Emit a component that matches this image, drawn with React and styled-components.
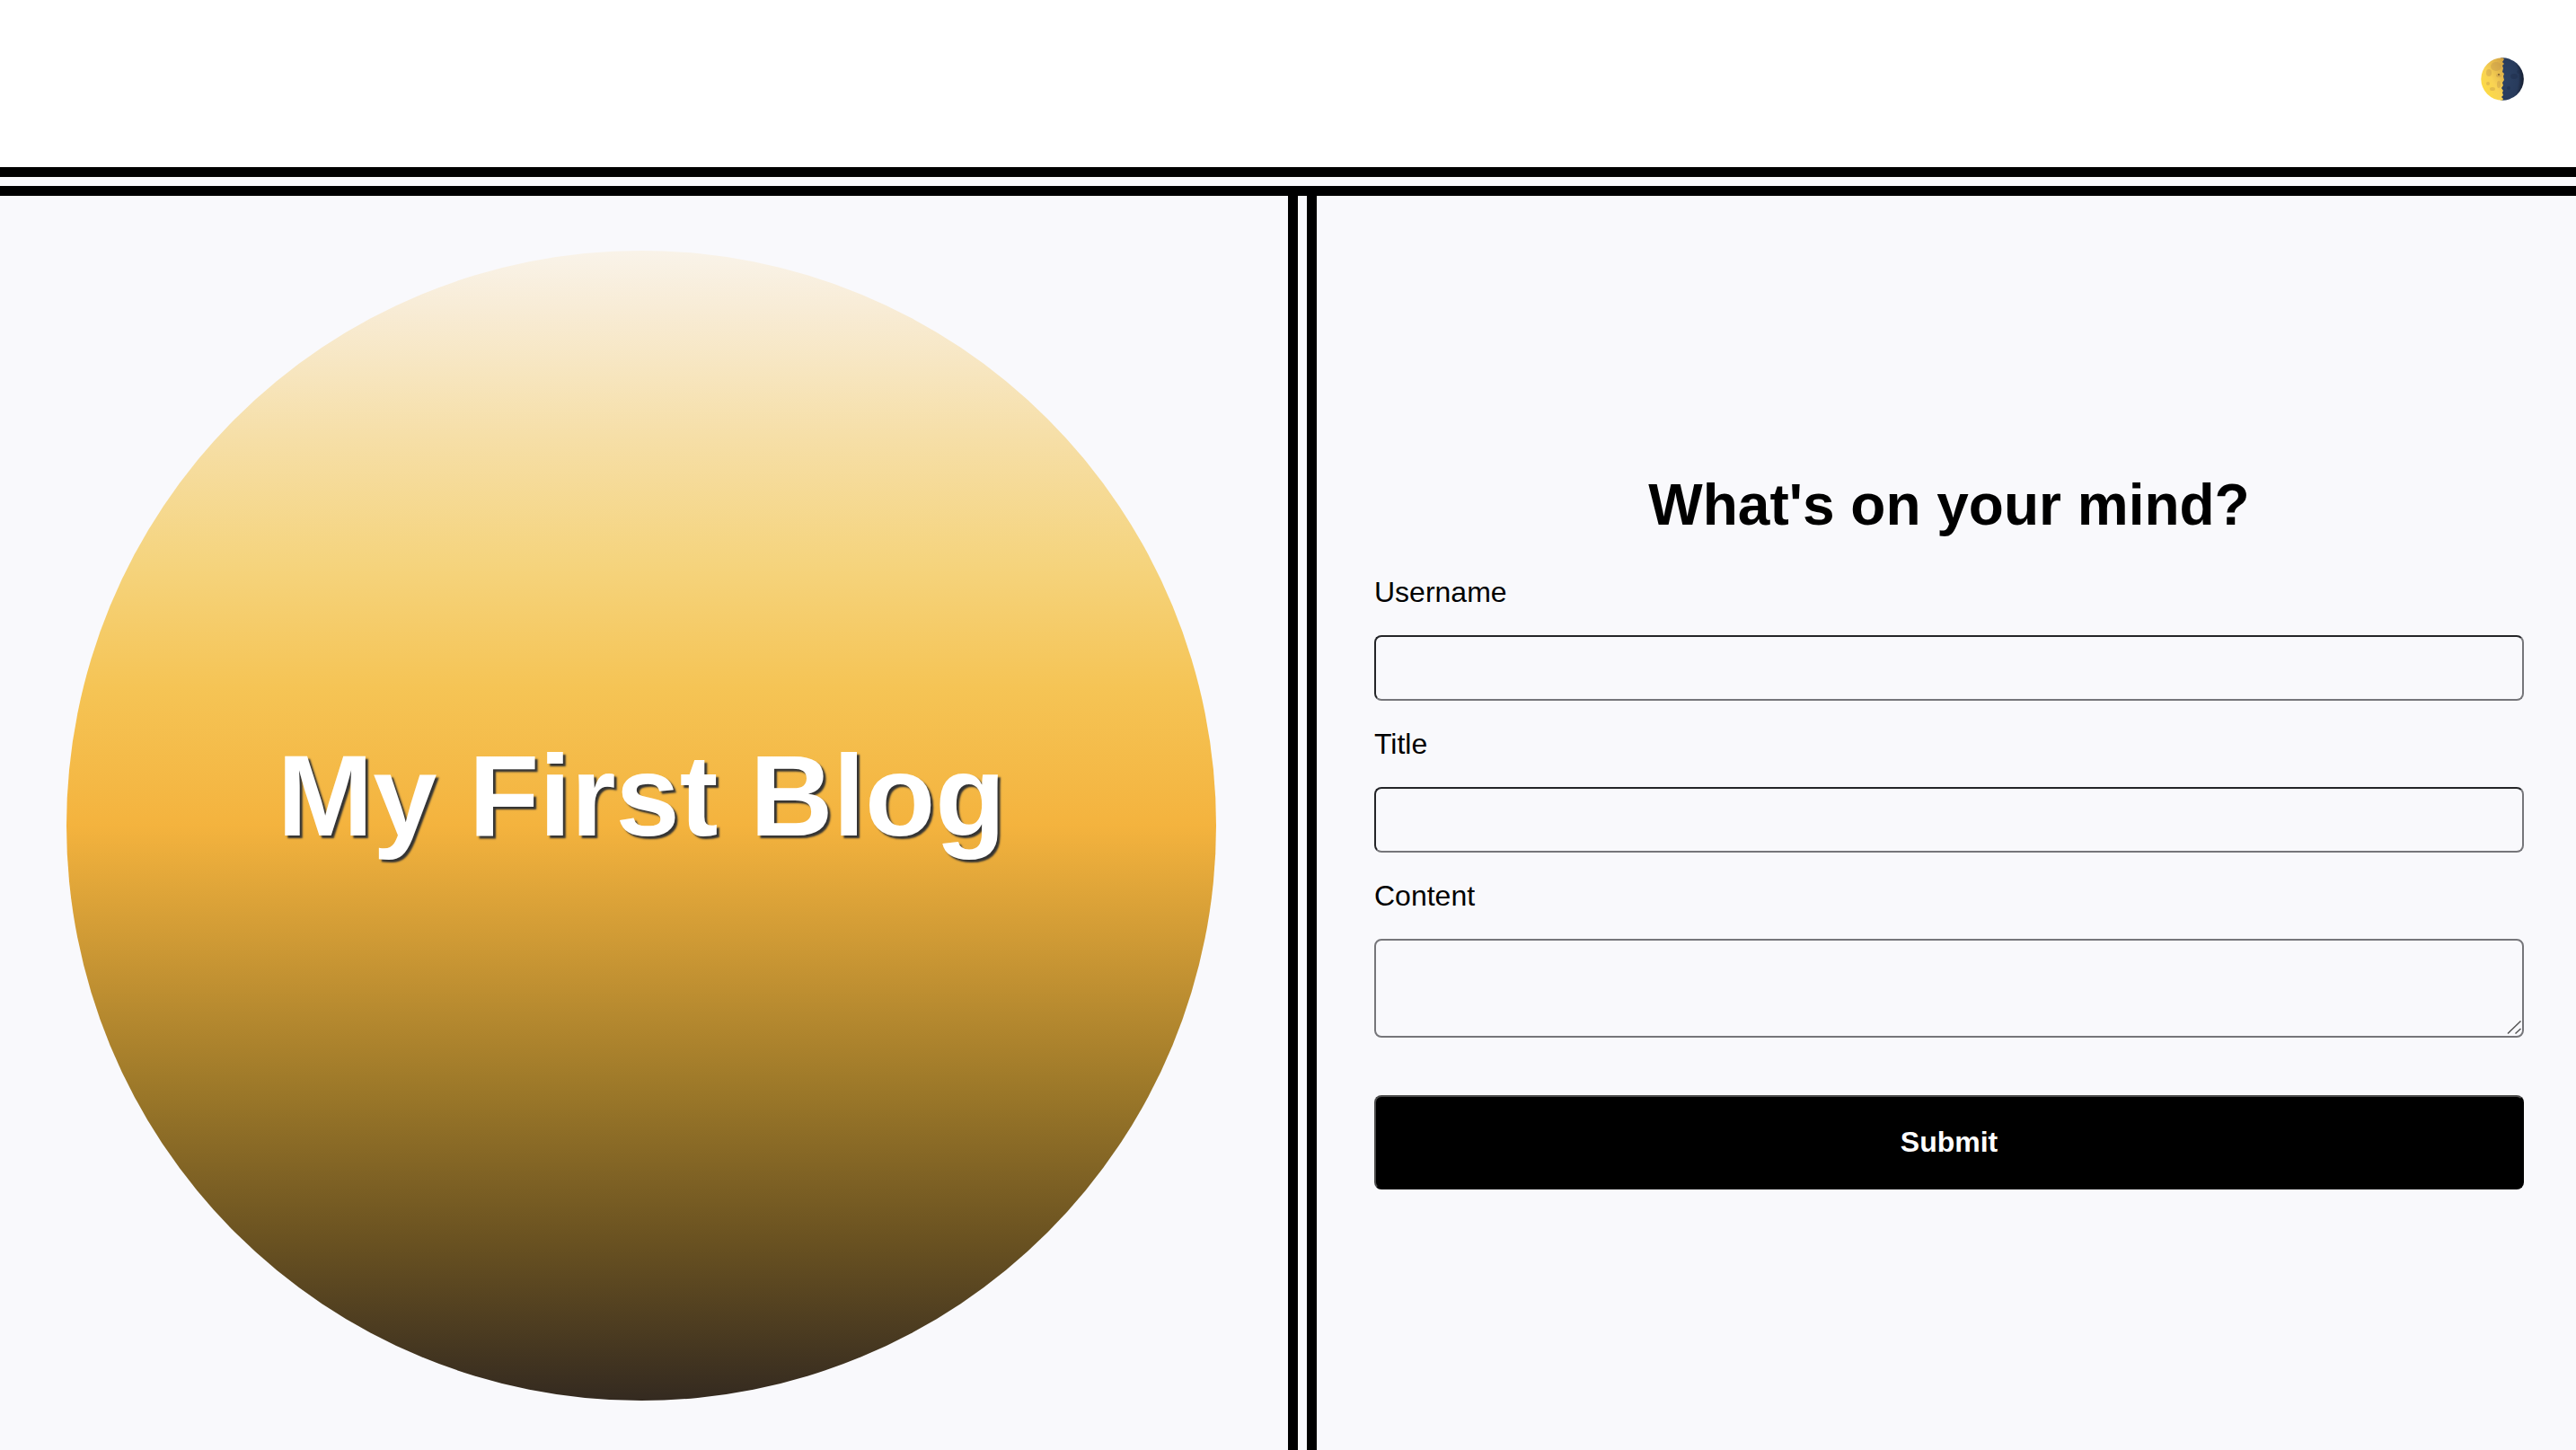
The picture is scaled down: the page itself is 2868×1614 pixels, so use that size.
import React, { useState } from "react";
import styled, { createGlobalStyle, css } from "styled-components";

const GlobalStyle = createGlobalStyle`
  *, *::before, *::after { box-sizing: border-box; }
  body {
    margin: 0;
    background: #ffffff;
    color: #000000;
    font-family: "Liberation Sans", Helvetica, Arial, sans-serif;
    font-size: 32px;
  }
`;

const Page = styled.div`
  display: flex;
  flex-direction: column;
  height: 100vh;
  overflow: hidden;
`;

const Header = styled.header`
  display: flex;
  flex: none;
  justify-content: flex-end;
  align-items: center;
  height: 186px;
  padding: 0 58px 10px;
`;

const ThemeToggle = styled.button`
  display: flex;
  padding: 0;
  border: 0;
  background: none;
  cursor: pointer;
`;

const Main = styled.main`
  display: grid;
  grid-template-columns: 1fr 1fr;
  flex: 1;
  border-top: 32px double #000000;
  background: #f9f9fc;
`;

const Hero = styled.section`
  padding: 61px 80px 55px 74px;
`;

const Sun = styled.div`
  display: flex;
  align-items: center;
  justify-content: center;
  aspect-ratio: 1;
  padding-bottom: 66px;
  border-radius: 50%;
  background: linear-gradient(
    #f9f3e9 0%,
    #f8ecd6 5%,
    #f6dfa8 16%,
    #f5d47e 27%,
    #f5c455 38%,
    #f4b33e 50%,
    #cf9a35 60%,
    #9c7829 73%,
    #6a5221 86%,
    #342a20 100%
  );
`;

const Title = styled.h1`
  margin: 0;
  color: #ffffff;
  font-size: 128px;
  line-height: 148px;
  text-shadow: 3px 3px 2px #333333;
`;

const Entry = styled.section`
  display: flex;
  align-items: center;
  padding: 16px 58px 0 64px;
  border-left: 32px double #000000;
`;

const Form = styled.form`
  display: flex;
  flex-direction: column;
  flex: 1;
  gap: 30px;
`;

const Heading = styled.h2`
  margin: 0;
  padding-bottom: 12px;
  font-size: 64px;
  line-height: 74px;
  text-align: center;
`;

const Field = styled.div`
  display: flex;
  flex-direction: column;
  gap: 30px;
`;

const Label = styled.label`
  line-height: 36px;
`;

const control = css`
  width: 100%;
  margin: 0;
  border-radius: 8px;
  background: transparent;
  font: inherit;
`;

const Input = styled.input`
  ${control}
  height: 73px;
  padding: 16px;
  border: 2px solid #76767a;
  border-top-color: #242528;
  border-left-color: #242528;
`;

const TextAreaFrame = styled.div`
  position: relative;
`;

const TextArea = styled.textarea`
  ${control}
  display: block;
  height: 110px;
  padding: 16px;
  border: 2px solid #76767a;
  resize: vertical;

  &::-webkit-resizer {
    background: transparent;
  }
`;

const Grip = styled.svg`
  position: absolute;
  right: 2px;
  bottom: 2px;
  pointer-events: none;
`;

const Submit = styled.button`
  ${control}
  height: 105px;
  margin-top: 34px;
  border: 2px solid #000000;
  border-top-color: #4c4c4c;
  border-left-color: #4c4c4c;
  background: #000000;
  color: #ffffff;
  font-weight: bold;
  cursor: pointer;
`;

const MoonIcon = () => (
  <svg width="48" height="48" viewBox="0 0 48 48" aria-hidden="true">
    <defs>
      <linearGradient id="lit" x1="0" y1="1" x2="0.9" y2="0">
        <stop offset="0" stopColor="#ffe03c" />
        <stop offset="0.5" stopColor="#f8d254" />
        <stop offset="1" stopColor="#d3a344" />
      </linearGradient>
      <radialGradient id="dark" cx="0.2" cy="0.5" r="0.8">
        <stop offset="0" stopColor="#2d4264" />
        <stop offset="0.7" stopColor="#283b5c" />
        <stop offset="1" stopColor="#141b2c" />
      </radialGradient>
    </defs>
    <path d="M22 .4A23.7 23.7 0 1 1 22 47.6z" fill="url(#dark)" />
    <path
      d="M24 .3A23.7 23.7 0 0 0 24 47.7L25 46l-2-2 2-2-1-3 1-2-2-3 2-3-1-3 2-3-1-4 1-3-2-2 1-4-1-3 2-2-2-2 2-3-2-2z"
      fill="url(#lit)"
    />
    <g fill="#c2964a" opacity="0.4">
      <ellipse cx="17" cy="10" rx="6" ry="5" />
      <ellipse cx="9" cy="17" rx="3" ry="4" />
      <ellipse cx="20" cy="20" rx="3" ry="2" />
      <ellipse cx="13" cy="35" rx="3" ry="2" />
      <ellipse cx="20" cy="30" rx="2" ry="4" />
      <circle cx="8" cy="29" r="2" />
    </g>
    <g fill="#1d2b48" opacity="0.4">
      <ellipse cx="37" cy="21" rx="4" ry="3" />
      <circle cx="42" cy="16" r="2" />
      <circle cx="31" cy="34" r="2" />
    </g>
    <circle cx="20" cy="19" r="1" fill="#7d5c2c" />
  </svg>
);

export default function App() {
  const [post, setPost] = useState({ username: "", title: "", content: "" });
  const bind = (name) => ({
    id: name,
    name,
    value: post[name],
    onChange: (event) => setPost({ ...post, [name]: event.target.value }),
  });

  return (
    <>
      <GlobalStyle />
      <Page>
        <Header>
          <ThemeToggle type="button" aria-label="Toggle theme">
            <MoonIcon />
          </ThemeToggle>
        </Header>
        <Main>
          <Hero>
            <Sun>
              <Title>My First Blog</Title>
            </Sun>
          </Hero>
          <Entry>
            <Form onSubmit={(event) => event.preventDefault()}>
              <Heading>What's on your mind?</Heading>
              <Field>
                <Label htmlFor="username">Username</Label>
                <Input type="text" {...bind("username")} />
              </Field>
              <Field>
                <Label htmlFor="title">Title</Label>
                <Input type="text" {...bind("title")} />
              </Field>
              <Field>
                <Label htmlFor="content">Content</Label>
                <TextAreaFrame>
                  <TextArea {...bind("content")} />
                  <Grip width="20" height="20" viewBox="0 0 20 20" aria-hidden="true">
                    <path d="M4 17.5 18.5 3.5M12.5 17.5 18.5 12" stroke="#555555" strokeWidth="1.5" fill="none" />
                  </Grip>
                </TextAreaFrame>
              </Field>
              <Submit type="submit">Submit</Submit>
            </Form>
          </Entry>
        </Main>
      </Page>
    </>
  );
}
